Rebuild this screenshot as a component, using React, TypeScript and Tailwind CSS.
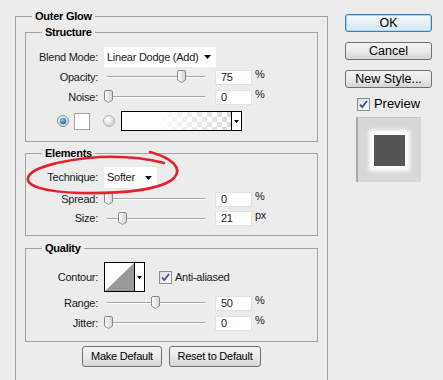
import React from 'react';

const Thumb: React.FC = () => (
  <svg width="9" height="13" viewBox="0 0 9 13">
    <defs>
      <linearGradient id="thumbFill" x1="0" x2="1" y1="0" y2="0">
        <stop offset="0" stopColor="#ffffff" />
        <stop offset="1" stopColor="#d2d2d2" />
      </linearGradient>
    </defs>
    <path
      d="M2 0.5h5a1.5 1.5 0 0 1 1.5 1.5v8l-4 2.5l-4-2.5v-8a1.5 1.5 0 0 1 1.5-1.5z"
      fill="url(#thumbFill)"
      stroke="#8a8a8a"
    />
  </svg>
);

const Arrow: React.FC = () => (
  <svg width="7" height="4" viewBox="0 0 7 4">
    <path d="M0 0h7L3.5 4z" fill="#000" />
  </svg>
);

const CheckBox: React.FC = () => (
  <span className="flex h-[13px] w-[13px] items-center justify-center border border-[#8e8f8f] bg-gradient-to-br from-[#dcdcdc] to-[#fbfbfb]">
    <svg width="9" height="9" viewBox="0 0 9 9">
      <path d="M1 4.5l2.2 2.5L8 1" fill="none" stroke="#3d4f91" strokeWidth="1.8" />
    </svg>
  </span>
);

const Radio: React.FC<{ on?: boolean }> = ({ on }) => (
  <svg width="12" height="12" viewBox="0 0 12 12">
    <defs>
      <radialGradient id="radioOff" cx="0.4" cy="0.35" r="0.7">
        <stop offset="0" stopColor="#ffffff" />
        <stop offset="1" stopColor="#cfcfcf" />
      </radialGradient>
      <radialGradient id="radioOn" cx="0.4" cy="0.35" r="0.7">
        <stop offset="0" stopColor="#8fd0f5" />
        <stop offset="1" stopColor="#0c5f9e" />
      </radialGradient>
    </defs>
    <circle cx="6" cy="6" r="5.5" fill="url(#radioOff)" stroke={on ? '#8c8c8c' : '#b5b5b5'} />
    {on && <circle cx="6" cy="6" r="3.2" fill="url(#radioOn)" />}
  </svg>
);

const Slider: React.FC<{ pos: number }> = ({ pos }) => (
  <div className="relative flex h-full w-[111px] items-center">
    <div className="ml-[3px] h-[2px] w-[98px] border-t border-b border-t-[#a7a7a7] border-b-white" />
    <div className="absolute top-[3px]" style={{ left: pos - 4.5 }}>
      <Thumb />
    </div>
  </div>
);

interface ValueRowProps {
  label: string;
  value: string;
  pos: number;
  unit?: string;
  h?: string;
}

const ValueRow: React.FC<ValueRowProps> = ({ label, value, pos, unit = '%', h = 'h-[20px]' }) => (
  <div className={`flex items-center ${h}`}>
    <span className="w-[72px] text-right">{label}</span>
    <div className="ml-[6px] h-full">
      <Slider pos={pos} />
    </div>
    <div className="h-[15px] w-[37px] border border-[#e2e2e2] bg-white pl-[5px] leading-[13px] text-[#222]">{value}</div>
    <span className="ml-[3px] -translate-y-[3px] text-[11px]">{unit}</span>
  </div>
);

const Group: React.FC<{ title: string; className?: string; children: React.ReactNode }> = ({ title, className = '', children }) => (
  <fieldset className={`border border-[#a3a3a3] ${className}`}>
    <legend className="ml-[16px] px-[3px] text-[11px] font-bold leading-[14px] text-black">{title}</legend>
    {children}
  </fieldset>
);

const GrayButton: React.FC<{ label: string; className?: string }> = ({ label, className = '' }) => (
  <button
    type="button"
    className={`rounded-[3px] border border-[#707070] bg-gradient-to-b from-[#f4f4f4] via-[#ebebeb] to-[#d5d5d5] text-black ${className}`}
  >
    {label}
  </button>
);

export default function App() {
  return (
    <div className="relative flex h-[380px] w-[443px] overflow-hidden bg-[#ececec] font-['Liberation_Sans',Arial,sans-serif] text-[11px] text-[#1a1a1a]">
      <div className="w-[328px] shrink-0 pl-[15px] pt-[9px] tracking-[-0.25px]">
        <fieldset className="h-[420px] border border-[#a3a3a3] px-[9px] pt-[2px]">
          <legend className="ml-[7px] px-[3px] text-[11px] font-bold leading-[14px] text-black">Outer Glow</legend>

          <Group title="Structure" className="pt-[8px] pb-[10px]">
            <div className="flex h-[20px] items-center">
              <span className="w-[72px] text-right">Blend Mode:</span>
              <div className="ml-[6px] flex h-[20px] w-[112px] items-center justify-between bg-white pl-[3px] pr-[5px]">
                <span>Linear Dodge (Add)</span>
                <Arrow />
              </div>
            </div>
            <ValueRow label="Opacity:" value="75" pos={77} />
            <ValueRow label="Noise:" value="0" pos={4} />
            <div className="mt-[4px] flex h-[20px] items-center">
              <div className="ml-[31px]">
                <Radio on />
              </div>
              <div className="ml-[5px] h-[17px] w-[16px] border border-[#a5a5a5] bg-white" />
              <div className="ml-[13px]">
                <Radio />
              </div>
              <div className="ml-[6px] flex h-[20px] w-[121px] border border-black">
                <div className="flex-1 bg-[repeating-conic-gradient(#dadada_0_25%,#ffffff_0_50%)] bg-[length:10px_10px]">
                  <div className="h-full w-full bg-gradient-to-r from-white from-30% to-transparent" />
                </div>
                <div className="flex w-[10px] items-center justify-center border-l border-black bg-white">
                  <svg width="5" height="3" viewBox="0 0 5 3">
                    <path d="M0 0h5L2.5 3z" fill="#000" />
                  </svg>
                </div>
              </div>
            </div>
          </Group>

          <Group title="Elements" className="mt-[4px] pt-[7px] pb-[7px]">
            <div className="flex h-[21px] items-center">
              <span className="w-[72px] text-right">Technique:</span>
              <div className="ml-[6px] flex h-[21px] w-[53px] items-center justify-between bg-white pl-[3px] pr-[5px]">
                <span>Softer</span>
                <Arrow />
              </div>
            </div>
            <div className="mt-[1px]">
              <ValueRow label="Spread:" value="0" pos={4} />
            </div>
            <ValueRow label="Size:" value="21" pos={18} unit="px" h="h-[19px]" />
          </Group>

          <Group title="Quality" className="mt-[5px] pt-[7px] pb-[8px]">
            <div className="flex h-[30px] items-center">
              <span className="w-[72px] text-right">Contour:</span>
              <div className="ml-[6px] flex h-[30px] w-[41px] border border-black bg-white">
                <svg width="29" height="28" viewBox="0 0 29 28">
                  <polygon points="29,0 29,28 0,28" fill="#999999" />
                </svg>
                <div className="flex w-[10px] items-center justify-center border-l border-black">
                  <svg width="5" height="3" viewBox="0 0 5 3">
                    <path d="M0 0h5L2.5 3z" fill="#000" />
                  </svg>
                </div>
              </div>
              <div className="ml-[14px] flex items-center">
                <CheckBox />
                <span className="ml-[3px]">Anti-aliased</span>
              </div>
            </div>
            <div className="mt-[1px]">
              <ValueRow label="Range:" value="50" pos={51} />
            </div>
            <ValueRow label="Jitter:" value="0" pos={4} />
          </Group>

          <div className="mt-[4px] flex justify-center gap-[7px]">
            <GrayButton label="Make Default" className="h-[21px] w-[80px] text-[11px]" />
            <GrayButton label="Reset to Default" className="h-[21px] w-[92px] text-[11px]" />
          </div>
        </fieldset>
      </div>

      <div className="ml-[17px] flex w-[87px] flex-col items-center pt-[14px] text-[12.5px]">
        <button
          type="button"
          className="h-[18px] w-[87px] rounded-[3px] border border-[#3c7fb1] bg-gradient-to-b from-[#f3f9fd] to-[#d6e9f6] leading-[16px] text-black shadow-[0_0_0_1px_#a9d7f3_inset]"
        >
          OK
        </button>
        <GrayButton label="Cancel" className="mt-[10px] h-[18px] w-[87px] leading-[16px]" />
        <GrayButton label="New Style..." className="mt-[10px] h-[18px] w-[87px] leading-[16px]" />
        <div className="mt-[8px] flex h-[16px] items-center">
          <CheckBox />
          <span className="ml-[4px] text-[13px] text-black">Preview</span>
        </div>
        <div className="mt-[5px] flex h-[65px] w-[65px] items-center justify-center border-l-2 border-t border-l-[#a9a9a9] border-t-[#c4c4c4] bg-[#d8d8d8]">
          <div className="h-[31px] w-[31px] bg-[#555555] shadow-[0_0_4px_5px_#ffffff]" />
        </div>
      </div>

      <svg className="pointer-events-none absolute left-0 top-0" width="443" height="380" viewBox="0 0 443 380">
        <path
          d="M150 152 C172 158 183 168 174 178 C162 190 120 194 80 193 C45 192 26 186 28 178 C30 168 60 160 100 157 C125 156 145 158 164 163"
          fill="none"
          stroke="#e3222b"
          strokeWidth="2.6"
          strokeLinecap="round"
        />
      </svg>
    </div>
  );
}
